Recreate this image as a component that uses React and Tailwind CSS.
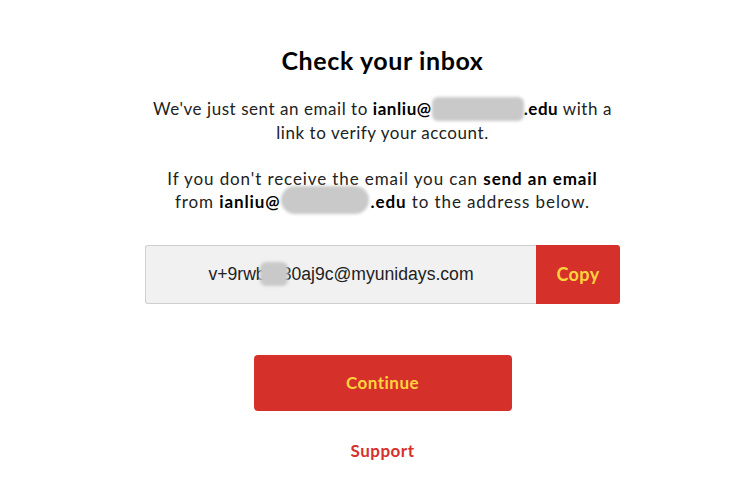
import React from "react";

// blurred-out part of an address
function Redacted({ w, h, className = "" }) {
  return (
    <span
      className={`inline-block align-middle bg-[#c9c9c9] blur-[1.5px] rounded-[6px] ${className}`}
      style={{ width: w, height: h }}
    />
  );
}

export default function App() {
  return (
    <div className="min-h-[501px] bg-white font-['Lato',sans-serif] text-[#111]">
      <div className="ml-[145px] w-[475px] flex flex-col items-center pt-[43px]">
        <h1 className="text-[25px] tracking-[0.6px] font-bold leading-[34px] text-black">Check your inbox</h1>

        <p className="mt-[20px] text-[17px] tracking-[0.55px] leading-[24px] text-center text-[#222]">
          We've just sent an email to <b className="font-bold text-black">ianliu@</b>
          <Redacted w={92} h={24} className="-mt-[4px]" />
          <b className="font-bold text-black">.edu</b> with a link to verify your account.
        </p>

        <p className="mt-[22px] text-[17px] tracking-[0.9px] leading-[23px] text-center text-[#222]">
          If you don't receive the email you can <b className="font-bold text-black">send an email</b>
          <br />
          from <b className="font-bold text-black">ianliu@</b>
          <Redacted w={88} h={28} className="-mt-[8px] mr-[2px] rounded-[14px]" />
          <b className="font-bold text-black">.edu</b> to the address below.
        </p>

        <div className="mt-[31px] w-full h-[59px] flex">
          <div className="flex-1 flex items-center justify-center bg-[#f1f1f1] border border-[#cfcfcf] border-r-0 rounded-l-[3px] font-['Liberation_Sans',Arial,sans-serif] text-[17.6px] text-[#222]">
            v+9rwb<Redacted w={28} h={24} className="-mx-[6px] rounded-[2px]" />30aj9c@myunidays.com
          </div>
          <button className="w-[84px] bg-[#d6302b] rounded-r-[3px] text-[#fdd43c] font-bold text-[18px] tracking-[0.4px]">
            Copy
          </button>
        </div>

        <button className="mt-[51px] w-[258px] h-[56px] rounded-[4px] bg-[#d6302b] text-[#fdd43c] font-bold text-[17px] tracking-[0.5px]">
          Continue
        </button>

        <a className="mt-[28px] text-[#d6302b] font-bold text-[17px] tracking-[0.5px] leading-[24px]">Support</a>
      </div>
    </div>
  );
}
